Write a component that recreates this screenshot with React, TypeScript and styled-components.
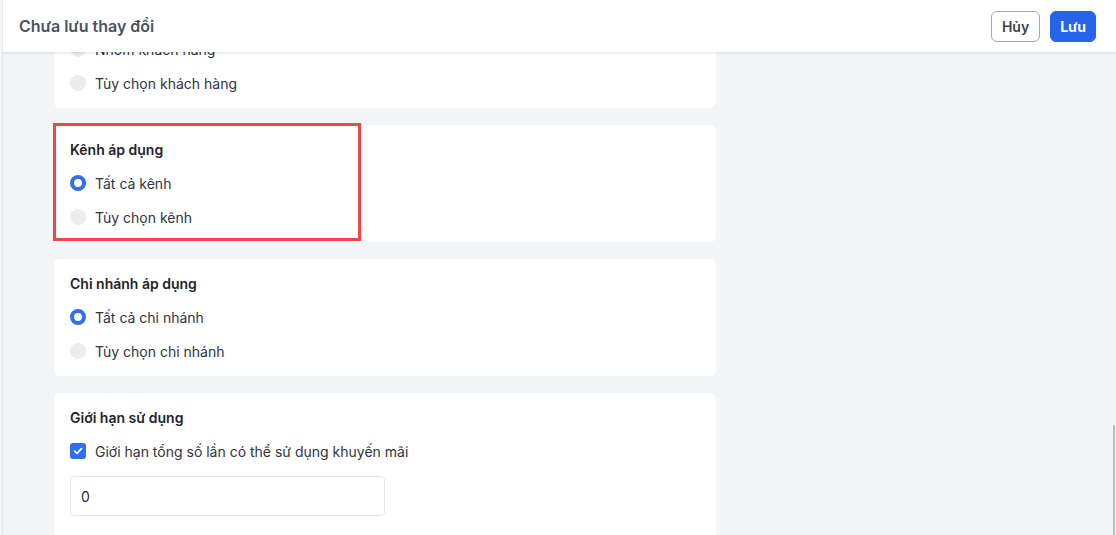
import { createGlobalStyle } from "styled-components";
import styled from "styled-components";

const GlobalStyle = createGlobalStyle`
  html, body {
    margin: 0;
    padding: 0;
    height: 100%;
    overflow: hidden;
    background: #f3f4f6;
    font-family: Inter, "Noto Sans", "Liberation Sans", sans-serif;
    color: #2b2f36;
  }
  * { box-sizing: border-box; }
`;

interface RadioOption {
  label: string;
  checked?: boolean;
}

interface SectionData {
  title: string;
  options: RadioOption[];
}

const sections: SectionData[] = [
  {
    title: "Khách hàng áp dụng",
    options: [
      { label: "Tất cả khách hàng" },
      { label: "Nhóm khách hàng" },
      { label: "Tùy chọn khách hàng" },
    ],
  },
  {
    title: "Kênh áp dụng",
    options: [{ label: "Tất cả kênh", checked: true }, { label: "Tùy chọn kênh" }],
  },
  {
    title: "Chi nhánh áp dụng",
    options: [
      { label: "Tất cả chi nhánh", checked: true },
      { label: "Tùy chọn chi nhánh" },
    ],
  },
];

export default function App() {
  return (
    <>
      <GlobalStyle />
      <Page>
        <Header>
          <HeaderTitle>Chưa lưu thay đổi</HeaderTitle>
          <Actions>
            <Button>Hủy</Button>
            <Button primary>Lưu</Button>
          </Actions>
        </Header>

        <Content>
          {sections.map((s, i) => (
            <Card key={s.title}>
              <CardTitle>{s.title}</CardTitle>
              {s.options.map((o) => (
                <OptionRow key={o.label}>
                  <Radio $checked={!!o.checked} />
                  <OptionLabel>{o.label}</OptionLabel>
                </OptionRow>
              ))}
              {i === 1 && <Highlight />}
            </Card>
          ))}

          <Card>
            <CardTitle>Giới hạn sử dụng</CardTitle>
            <OptionRow>
              <Checkbox>
                <svg width="10" height="10" viewBox="0 0 10 10" fill="none">
                  <path
                    d="M1.6 5.2 L4 7.5 L8.4 2.6"
                    stroke="#fff"
                    strokeWidth="1.7"
                    strokeLinecap="round"
                    strokeLinejoin="round"
                  />
                </svg>
              </Checkbox>
              <OptionLabel>Giới hạn tổng số lần có thể sử dụng khuyến mãi</OptionLabel>
            </OptionRow>
            <NumberInput defaultValue="0" />
          </Card>
        </Content>

        <ScrollThumb />
      </Page>
    </>
  );
}

const Page = styled.div`
  position: relative;
  height: 100vh;
  overflow: hidden;
  border-left: 1px solid #e4e6ea;
  margin-left: 2px;
`;

const Header = styled.header`
  position: absolute;
  top: 0;
  left: -3px;
  right: 0;
  z-index: 10;
  height: 52px;
  padding: 0 20px 0 19px;
  display: flex;
  align-items: center;
  justify-content: space-between;
  background: #fff;
  box-shadow: 0 1px 3px rgba(0, 0, 0, 0.12);
`;

const HeaderTitle = styled.div`
  font-size: 16px;
  font-weight: 600;
  color: #4b5260;
`;

const Actions = styled.div`
  display: flex;
  gap: 10px;
`;

const Button = styled.button<{ primary?: boolean }>`
  height: 31px;
  padding: 0 ${(p) => (p.primary ? "9px" : "10px")};
  border-radius: 6px;
  font-family: inherit;
  font-size: 14px;
  font-weight: ${(p) => (p.primary ? 700 : 600)};
  cursor: pointer;
  border: 1px solid ${(p) => (p.primary ? "#2563eb" : "#a3a8b0")};
  background: ${(p) => (p.primary ? "#2563eb" : "#fff")};
  color: ${(p) => (p.primary ? "#fff" : "#3d4350")};
`;

const Content = styled.main`
  width: 662px;
  margin: -43px 0 0 51px;
  display: flex;
  flex-direction: column;
  gap: 17px;
`;

const Card = styled.section`
  position: relative;
  background: #fff;
  border-radius: 6px;
  padding: 15px 16px 8px;
`;

const CardTitle = styled.div`
  font-size: 14px;
  line-height: 20px;
  font-weight: 600;
  color: #1f2329;
  margin-bottom: 6px;
`;

const OptionRow = styled.label`
  display: flex;
  align-items: center;
  gap: 9px;
  height: 34px;
`;

const Radio = styled.span<{ $checked: boolean }>`
  width: 16px;
  height: 16px;
  border-radius: 50%;
  flex-shrink: 0;
  background: ${(p) => (p.$checked ? "#fff" : "#ececec")};
  border: ${(p) => (p.$checked ? "4.5px solid #2f6fed" : "none")};
`;

const Checkbox = styled.span`
  width: 16px;
  height: 16px;
  border-radius: 3px;
  flex-shrink: 0;
  background: #2f6fed;
  display: flex;
  align-items: center;
  justify-content: center;
`;

const OptionLabel = styled.span`
  font-size: 14px;
  color: #30343b;
`;

const NumberInput = styled.input`
  display: block;
  width: 315px;
  height: 40px;
  margin: 8px 0 20px;
  padding: 0 10px;
  border: 1px solid #e3e6ea;
  border-radius: 4px;
  font-family: inherit;
  font-size: 14px;
  color: #2b2f36;
  outline: none;
`;

const Highlight = styled.div`
  position: absolute;
  top: -2px;
  left: -1px;
  width: 308px;
  height: 118px;
  border: 3px solid #f0454a;
  pointer-events: none;
`;

const ScrollThumb = styled.div`
  position: absolute;
  right: 1px;
  top: 425px;
  bottom: 0;
  width: 2px;
  background: #bdbdbd;
`;
